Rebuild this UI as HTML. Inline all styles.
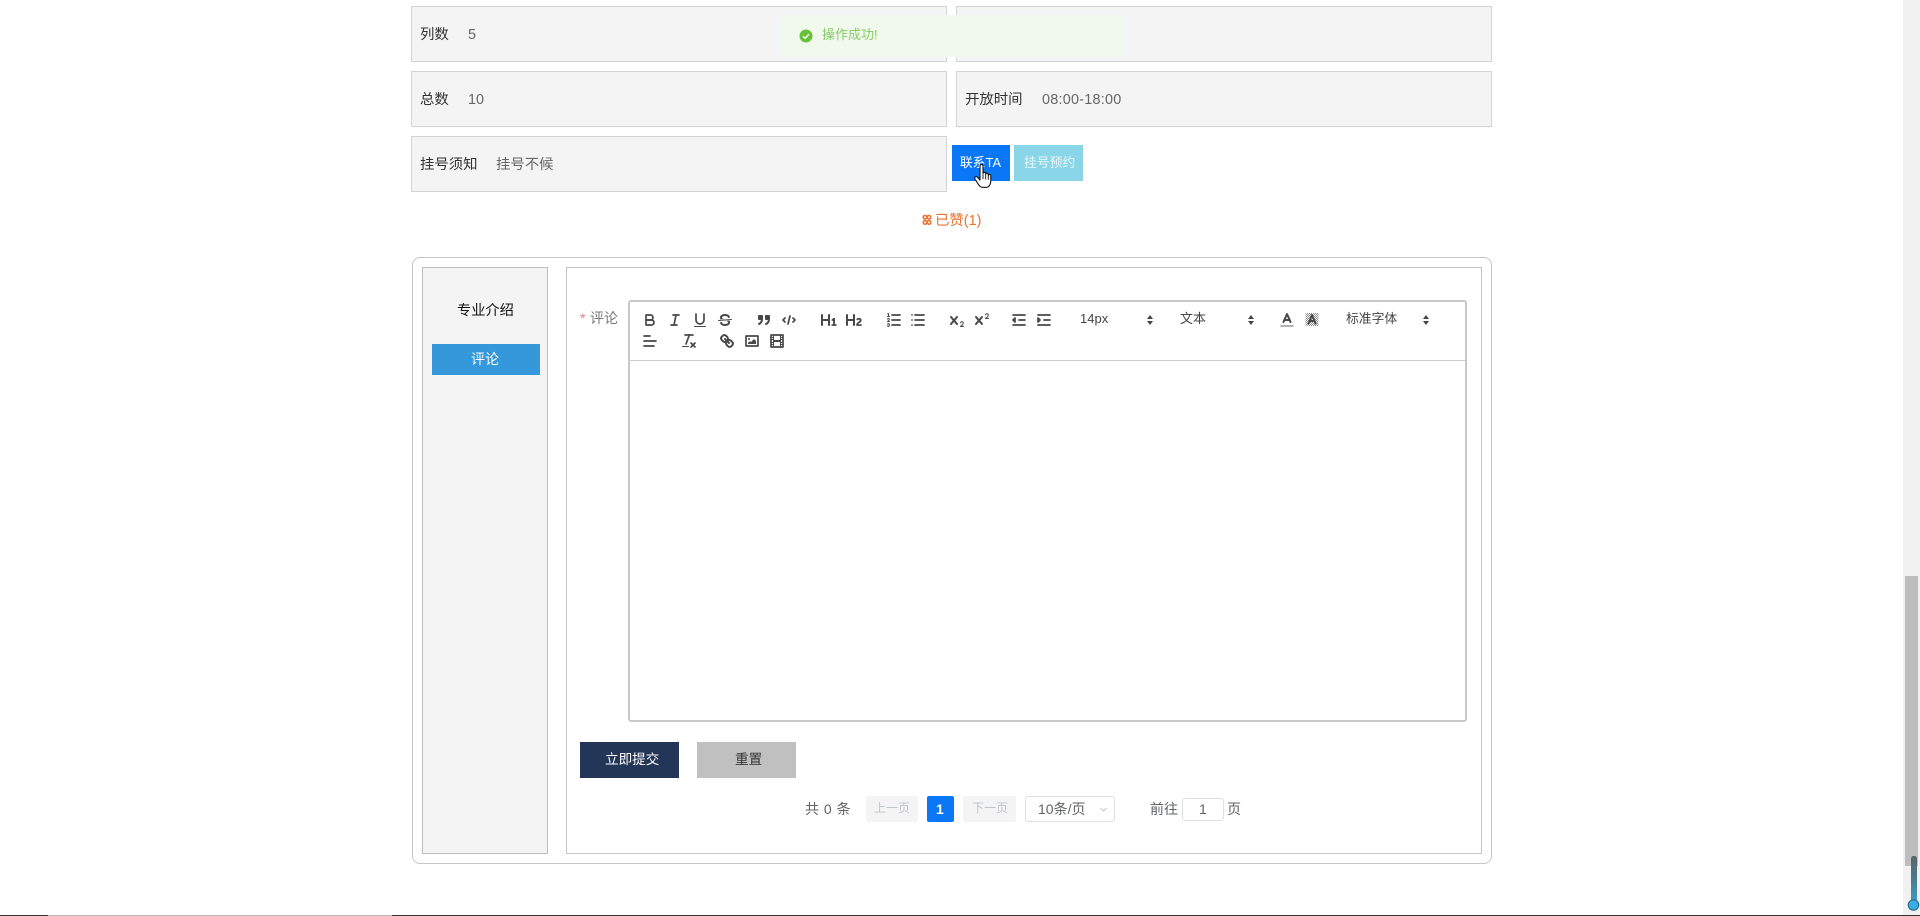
<!DOCTYPE html>
<html lang="zh">
<head>
<meta charset="utf-8">
<title>评论</title>
<style>
html,body{margin:0;padding:0;background:#fff;width:1920px;height:916px;overflow:hidden}
body{position:relative;font-family:"Liberation Sans","Noto Sans CJK SC",sans-serif;font-size:14px;color:#333}
.a{position:absolute;box-sizing:border-box}
.t{position:absolute;white-space:nowrap;line-height:20px;font-size:14px}
.cell{position:absolute;box-sizing:border-box;height:56px;background:#f4f4f4;border:1px solid #d2d4d6}
.lb{color:#333;font-size:14.4px}.val{color:#666;font-size:14.4px}
svg.i{position:absolute;width:18px;height:18px;fill:none;stroke:#484848;stroke-width:1.7;stroke-linecap:round;stroke-linejoin:round}
svg.i .f{fill:#484848;stroke:none}
svg.i .th{stroke-width:1}
svg.i .fs{fill:#484848}
.arr{position:absolute;width:0;height:0;border-left:3px solid transparent;border-right:3px solid transparent}
.up{border-bottom:4px solid #444}
.dn{border-top:4px solid #444}
</style>
</head>
<body>
<!-- info rows -->
<div class="cell" style="left:411px;top:6px;width:536px"></div>
<div class="cell" style="left:956px;top:6px;width:536px"></div>
<div class="cell" style="left:411px;top:71px;width:536px"></div>
<div class="cell" style="left:956px;top:71px;width:536px"></div>
<div class="cell" style="left:411px;top:136px;width:536px"></div>

<div class="t lb" style="left:420px;top:25px">列数</div>
<div class="t val" style="left:468px;top:25px">5</div>
<div class="t lb" style="left:420px;top:90px">总数</div>
<div class="t val" style="left:468px;top:90px">10</div>
<div class="t lb" style="left:965px;top:90px">开放时间</div>
<div class="t val" style="left:1042px;top:90px;letter-spacing:.25px">08:00-18:00</div>
<div class="t lb" style="left:420px;top:155px">挂号须知</div>
<div class="t val" style="left:496px;top:155px">挂号不候</div>

<!-- toast -->
<div class="a" style="left:782px;top:15px;width:340px;height:42px;background:#f0f9eb;border-radius:4px"></div>
<svg class="a" style="left:799px;top:29px" width="14" height="14" viewBox="0 0 14 14"><circle cx="7" cy="7" r="6.5" fill="#67c23a"/><path d="M4 7.2l2.1 2.1L10 5.2" fill="none" stroke="#fff" stroke-width="1.4"/></svg>
<div class="t" style="left:822px;top:25px;color:#86cd67;font-size:13px">操作成功!</div>

<!-- buttons -->
<div class="a" style="left:952px;top:145px;width:58px;height:36px;background:#0a77f7"></div>
<div class="t" style="left:960px;top:153px;color:#fff;font-size:12.8px">联系TA</div>
<div class="a" style="left:1014px;top:145px;width:69px;height:36px;background:#8ad5e8"></div>
<div class="t" style="left:1024px;top:153px;color:#e9f8fb;font-size:12.8px">挂号预约</div>

<!-- like -->
<svg class="a" style="left:922px;top:214px" width="10" height="12" viewBox="0 0 10 12" fill="none" stroke="#e8742f" stroke-width="1.6"><circle cx="3" cy="3.2" r="1.8"/><circle cx="7" cy="3.2" r="1.8"/><circle cx="3" cy="8.4" r="1.8"/><circle cx="7" cy="8.4" r="1.8"/></svg>
<div class="t" style="left:935px;top:211px;color:#e8742f;font-size:14.4px">已赞(1)</div>

<!-- main box -->
<div class="a" style="left:412px;top:257px;width:1080px;height:607px;border:1px solid #c6c6c6;border-radius:8px"></div>
<div class="a" style="left:422px;top:267px;width:126px;height:587px;background:#f4f4f4;border:1px solid #bdbdbd"></div>
<div class="a" style="left:566px;top:267px;width:916px;height:587px;border:1px solid #c4c4c4"></div>

<div class="t" style="left:457px;top:301px;color:#111;font-size:14.2px">专业介绍</div>
<div class="a" style="left:432px;top:344px;width:108px;height:31px;background:#3498db"></div>
<div class="t" style="left:471px;top:349px;color:#fff">评论</div>

<div class="t" style="left:580px;top:308px;color:#e98080">*</div>
<div class="t" style="left:590px;top:308px;color:#777">评论</div>

<!-- editor -->
<div class="a" style="left:628px;top:300px;width:839px;height:422px;border:2px solid #c8c8c8;border-radius:3px"></div>
<div class="a" style="left:630px;top:360px;width:835px;height:1px;background:#ccc"></div>

<!-- toolbar row 1 -->
<svg class="i" style="left:641px;top:311px" viewBox="0 0 18 18"><path d="M5,4H9.5A2.5,2.5,0,0,1,12,6.5v0A2.5,2.5,0,0,1,9.5,9H5A0,0,0,0,1,5,9V4A0,0,0,0,1,5,4Z"/><path d="M5,9h5.5A2.5,2.5,0,0,1,13,11.5v0A2.5,2.5,0,0,1,10.5,14H5a0,0,0,0,1,0,0V9A0,0,0,0,1,5,9Z"/></svg>
<svg class="i" style="left:666px;top:311px" viewBox="0 0 18 18"><line x1="7" x2="13" y1="4" y2="4"/><line x1="5" x2="11" y1="14" y2="14"/><line x1="8" x2="10" y1="14" y2="4"/></svg>
<svg class="i" style="left:691px;top:311px" viewBox="0 0 18 18"><path d="M5,3V9a4.012,4.012,0,0,0,4,4H9a4.012,4.012,0,0,0,4-4V3"/><rect class="f" height="1" rx=".5" ry=".5" width="12" x="3" y="15"/></svg>
<svg class="i" style="left:716px;top:311px" viewBox="0 0 18 18"><line class="th" x1="15.5" x2="2.5" y1="8.5" y2="9.5"/><path class="f" d="M9.007,8C6.542,7.791,6,7.519,6,6.5,6,5.792,7.283,5,9,5c1.571,0,2.765.679,2.969,1.309a1,1,0,0,0,1.9-.617C13.356,4.106,11.354,3,9,3,6.2,3,4,4.538,4,6.5a3.2,3.2,0,0,0,.5,1.843Z"/><path class="f" d="M8.984,10C11.457,10.208,12,10.479,12,11.5c0,.708-1.283,1.5-3,1.5-1.571,0-2.765-.679-2.969-1.309a1,1,0,1,0-1.9.617C4.644,13.894,6.646,15,9,15c2.8,0,5-1.538,5-3.5a3.2,3.2,0,0,0-.5-1.843Z"/></svg>
<svg class="i" style="left:755px;top:311px;stroke-width:2" viewBox="0 0 18 18"><rect class="fs" height="3" width="3" x="4" y="5"/><rect class="fs" height="3" width="3" x="11" y="5"/><path d="M7,8c0,4.031-3,5-3,5"/><path d="M14,8c0,4.031-3,5-3,5"/></svg>
<svg class="i" style="left:780px;top:311px" viewBox="0 0 18 18"><polyline points="5 7 3 9 5 11"/><polyline points="13 7 15 9 13 11"/><line x1="10" x2="8" y1="5" y2="13"/></svg>
<svg class="i" style="left:820px;top:311px" viewBox="0 0 18 18"><path class="f" d="M10,4V14a1,1,0,0,1-2,0V10H3v4a1,1,0,0,1-2,0V4A1,1,0,0,1,3,4V8H8V4a1,1,0,0,1,2,0Zm6.06787,9.209H14.98975V7.59863a.54085.54085,0,0,0-.605-.60547h-.62744a1.01119,1.01119,0,0,0-.748.29688L11.645,8.56641a.5435.5435,0,0,0-.022.8584l.28613.30762a.53861.53861,0,0,0,.84717.0332l.09912-.08789a1.2137,1.2137,0,0,0,.2417-.35254h.02246s-.01123.30859-.01123.60547V13.209H12.041a.54085.54085,0,0,0-.605.60547v.43945a.54085.54085,0,0,0,.605.60547h4.02686a.54085.54085,0,0,0,.605-.60547v-.43945A.54085.54085,0,0,0,16.06787,13.209Z"/></svg>
<svg class="i" style="left:845px;top:311px" viewBox="0 0 18 18"><path class="f" d="M16.73975,13.81445v.43945a.54085.54085,0,0,1-.605.60547H11.855a.58392.58392,0,0,1-.64893-.60547V14.0127c0-2.90527,3.39941-3.42187,3.39941-4.55469a.77675.77675,0,0,0-.84717-.78125,1.17684,1.17684,0,0,0-.83594.38477c-.2749.26367-.561.374-.85791.13184l-.4292-.34082c-.30811-.24219-.38525-.51758-.1543-.81445a2.97155,2.97155,0,0,1,2.45361-1.17676,2.45393,2.45393,0,0,1,2.68408,2.40918c0,2.45312-3.1792,2.92676-3.27832,3.93848h2.79443A.54085.54085,0,0,1,16.73975,13.81445ZM9,3A.99974.99974,0,0,0,8,4V8H3V4A1,1,0,0,0,1,4V14a1,1,0,0,0,2,0V10H8v4a1,1,0,0,0,2,0V4A.99974.99974,0,0,0,9,3Z"/></svg>
<svg class="i" style="left:885px;top:311px" viewBox="0 0 18 18"><line x1="7" x2="15" y1="4" y2="4"/><line x1="7" x2="15" y1="9" y2="9"/><line x1="7" x2="15" y1="14" y2="14"/><line class="th" x1="2.5" x2="4.5" y1="5.5" y2="5.5"/><path class="f" d="M3.5,6A0.5,0.5,0,0,1,3,5.5V3.085l-0.276.138A0.5,0.5,0,0,1,2.053,3c-0.124-.247-0.023-0.324.224-0.447l1-.5A0.5,0.5,0,0,1,4,2.5v3A0.5,0.5,0,0,1,3.5,6Z"/><path class="th" d="M4.5,10.5h-2c0-.234,1.85-1.076,1.85-2.234A0.959,0.959,0,0,0,2.5,8.156"/><path class="th" d="M2.5,14.846a0.959,0.959,0,0,0,1.85-.109A0.7,0.7,0,0,0,3.75,14a0.688,0.688,0,0,0,.6-0.736,0.959,0.959,0,0,0-1.85-.109"/></svg>
<svg class="i" style="left:909px;top:311px" viewBox="0 0 18 18"><line x1="6" x2="15" y1="4" y2="4"/><line x1="6" x2="15" y1="9" y2="9"/><line x1="6" x2="15" y1="14" y2="14"/><line x1="3" x2="3" y1="4" y2="4"/><line x1="3" x2="3" y1="9" y2="9"/><line x1="3" x2="3" y1="14" y2="14"/></svg>
<svg class="i" style="left:948px;top:311px" viewBox="0 0 18 18"><path class="f" d="M15.5,15H13.861a3.858,3.858,0,0,0,1.914-2.975,1.8,1.8,0,0,0-1.6-1.751A1.921,1.921,0,0,0,12.021,11.7a0.50013,0.50013,0,1,0,.957.291h0a0.914,0.914,0,0,1,1.053-.725,0.81,0.81,0,0,1,.744.762c0,1.076-1.16971,1.86982-1.93971,2.43082A1.45639,1.45639,0,0,0,12,15.5a0.5,0.5,0,0,0,.5.5h3A0.5,0.5,0,0,0,15.5,15Z"/><path class="f" d="M9.65,5.241a1,1,0,0,0-1.409.108L6,7.964,3.759,5.349A1,1,0,0,0,2.192,6.59178Q2.2135,6.6178,2.241,6.651L4.684,9.5,2.241,12.35A1,1,0,0,0,3.71,13.70722q0.02322-.02511.049-0.05722L6,11.036,8.241,13.65a1,1,0,1,0,1.567-1.24277Q9.78722,12.3822,9.759,12.35L7.316,9.5,9.759,6.651A1,1,0,0,0,9.65,5.241Z"/></svg>
<svg class="i" style="left:973px;top:311px" viewBox="0 0 18 18"><path class="f" d="M15.5,7H13.861a4.015,4.015,0,0,0,1.914-2.975,1.8,1.8,0,0,0-1.6-1.751A1.922,1.922,0,0,0,12.021,3.7a0.5,0.5,0,1,0,.957.291,0.917,0.917,0,0,1,1.053-.725,0.81,0.81,0,0,1,.744.762c0,1.077-1.164,1.925-1.934,2.486A1.423,1.423,0,0,0,12,7.5a0.5,0.5,0,0,0,.5.5h3A0.5,0.5,0,0,0,15.5,7Z"/><path class="f" d="M9.651,5.241a1,1,0,0,0-1.41.108L6,7.964,3.759,5.349a1,1,0,1,0-1.519,1.3L4.683,9.5,2.241,12.35a1,1,0,1,0,1.519,1.3L6,11.036,8.241,13.65a1,1,0,0,0,1.519-1.3L7.317,9.5,9.759,6.651A1,1,0,0,0,9.651,5.241Z"/></svg>
<svg class="i" style="left:1010px;top:311px" viewBox="0 0 18 18"><line x1="3" x2="15" y1="14" y2="14"/><line x1="3" x2="15" y1="4" y2="4"/><line x1="9" x2="15" y1="9" y2="9"/><polygon class="fs" points="5 7 5 11 3 9 5 7"/></svg>
<svg class="i" style="left:1035px;top:311px" viewBox="0 0 18 18"><line x1="3" x2="15" y1="14" y2="14"/><line x1="3" x2="15" y1="4" y2="4"/><line x1="9" x2="15" y1="9" y2="9"/><polygon class="fs" points="3 7 3 11 5 9 3 7"/></svg>

<div class="t" style="left:1080px;top:309px;font-size:13px;color:#444">14px</div>
<div class="arr up" style="left:1147px;top:315px"></div><div class="arr dn" style="left:1147px;top:321px"></div>
<div class="t" style="left:1180px;top:309px;font-size:13px;color:#444">文本</div>
<div class="arr up" style="left:1248px;top:315px"></div><div class="arr dn" style="left:1248px;top:321px"></div>
<svg class="i" style="left:1278px;top:311px;stroke-width:2" viewBox="0 0 18 18"><line x1="3" x2="15" y1="15" y2="15" stroke="#999" stroke-width="1.4"/><polyline points="5.5 11 9 3 12.5 11"/><line x1="11.63" x2="6.38" y1="9" y2="9"/></svg>
<svg class="i" style="left:1303px;top:311px;stroke-width:2" viewBox="0 0 18 18"><defs><pattern id="dots" width="2" height="2" patternUnits="userSpaceOnUse"><rect width="1" height="1" fill="#888" stroke="none"/><rect x="1" y="1" width="1" height="1" fill="#888" stroke="none"/></pattern></defs><rect x="2.5" y="2" width="13" height="13" fill="url(#dots)" stroke="none"/><polyline points="5.5 12.5 9 4 12.5 12.5"/><line x1="11.63" x2="6.38" y1="10" y2="10"/></svg>
<div class="t" style="left:1346px;top:309px;font-size:12.8px;color:#444">标准字体</div>
<div class="arr up" style="left:1423px;top:315px"></div><div class="arr dn" style="left:1423px;top:321px"></div>

<!-- toolbar row 2 -->
<svg class="i" style="left:641px;top:332px" viewBox="0 0 18 18"><line x1="3" x2="15" y1="9" y2="9"/><line x1="3" x2="13" y1="14" y2="14"/><line x1="3" x2="9" y1="4" y2="4"/></svg>
<svg class="i" style="left:680px;top:332px" viewBox="0 0 18 18"><line x1="5" x2="13" y1="3" y2="3"/><line x1="6" x2="9.35" y1="12" y2="3"/><line x1="11" x2="15" y1="11" y2="15"/><line x1="15" x2="11" y1="11" y2="15"/><rect class="f" height="1" rx=".5" ry=".5" width="7" x="2" y="14"/></svg>
<svg class="i" style="left:718px;top:332px;stroke-width:2" viewBox="0 0 18 18"><line x1="7" x2="11" y1="7" y2="11"/><path d="M8.9,4.577a3.476,3.476,0,0,1,.36,4.679A3.476,3.476,0,0,1,4.577,8.9C3.185,7.5,2.035,6.4,4.217,4.217S7.5,3.185,8.9,4.577Z"/><path d="M13.423,9.1a3.476,3.476,0,0,0-4.679-.36,3.476,3.476,0,0,0,.36,4.679c1.392,1.392,2.5,2.542,4.679.36S14.815,10.5,13.423,9.1Z"/></svg>
<svg class="i" style="left:743px;top:332px" viewBox="0 0 18 18"><rect height="10" width="12" x="3" y="4"/><circle class="f" cx="6" cy="7" r="1"/><polyline class="f" points="5 12 5 11 7 9 8 10 11 7 13 9 13 12 5 12"/></svg>
<svg class="i" style="left:768px;top:332px" viewBox="0 0 18 18"><rect height="12" width="12" x="3" y="3"/><rect class="f" height="12" width="1" x="5" y="3"/><rect class="f" height="12" width="1" x="12" y="3"/><rect class="f" height="2" width="8" x="5" y="8"/><rect class="f" height="1" width="3" x="3" y="5"/><rect class="f" height="1" width="3" x="3" y="7"/><rect class="f" height="1" width="3" x="3" y="10"/><rect class="f" height="1" width="3" x="3" y="12"/><rect class="f" height="1" width="3" x="12" y="5"/><rect class="f" height="1" width="3" x="12" y="7"/><rect class="f" height="1" width="3" x="12" y="10"/><rect class="f" height="1" width="3" x="12" y="12"/></svg>

<!-- form buttons -->
<div class="a" style="left:580px;top:742px;width:99px;height:36px;background:#233658"></div>
<div class="t" style="left:605px;top:750px;color:#fff;font-size:13.6px">立即提交</div>
<div class="a" style="left:697px;top:742px;width:99px;height:36px;background:#c0c0c0"></div>
<div class="t" style="left:735px;top:750px;color:#333;font-size:13.6px">重置</div>

<!-- pagination -->
<div class="t" style="left:805px;top:799px;color:#606266;letter-spacing:.5px">共 0 条</div>
<div class="a" style="left:866px;top:796px;width:52px;height:26px;background:#f4f4f5;border-radius:2px"></div>
<div class="t" style="left:874px;top:798px;font-size:12px;color:#c0c4cc">上一页</div>
<div class="a" style="left:927px;top:796px;width:27px;height:26px;background:#0a77f7;border-radius:2px"></div>
<div class="t" style="left:936px;top:799px;font-size:14px;font-weight:bold;color:#fff">1</div>
<div class="a" style="left:963px;top:796px;width:53px;height:26px;background:#f4f4f5;border-radius:2px"></div>
<div class="t" style="left:972px;top:798px;font-size:12px;color:#c0c4cc">下一页</div>
<div class="a" style="left:1025px;top:796px;width:90px;height:26px;border:1px solid #dcdfe6;border-radius:3px"></div>
<div class="t" style="left:1038px;top:799px;font-size:14px;color:#606266">10条/页</div>
<svg class="a" style="left:1100px;top:807px" width="7" height="5" viewBox="0 0 7 5"><path d="M.5 1l3 3 3-3" fill="none" stroke="#c0c4cc"/></svg>
<div class="t" style="left:1150px;top:799px;color:#606266">前往</div>
<div class="a" style="left:1182px;top:798px;width:42px;height:23px;border:1px solid #dcdfe6;border-radius:3px"></div>
<div class="t" style="left:1199px;top:799px;font-size:14px;color:#606266">1</div>
<div class="t" style="left:1227px;top:799px;color:#606266">页</div>

<!-- scrollbar -->
<div class="a" style="left:1903px;top:0;width:17px;height:916px;background:#f1f1f1"></div>
<div class="a" style="left:1905px;top:576px;width:13px;height:290px;background:#bdbdbd"></div>
<svg class="a" style="left:1905px;top:854px" width="15" height="61" viewBox="0 0 15 61"><defs><linearGradient id="st" x1="0" y1="0" x2="0" y2="1"><stop offset="0" stop-color="#56666a"/><stop offset=".5" stop-color="#4a7d92"/><stop offset="1" stop-color="#3a9fd0"/></linearGradient></defs><rect x="6" y="2" width="6" height="48" rx="2.5" fill="url(#st)"/><circle cx="8.5" cy="51" r="5.2" fill="#39aee0" stroke="#2c6f8c" stroke-width="1.2"/></svg>

<!-- bottom edge -->
<div class="a" style="left:0;top:915px;width:1920px;height:1px;background:#333"></div>
<div class="a" style="left:48px;top:915px;width:344px;height:1px;background:#bbb"></div>

<!-- hand cursor -->
<svg class="a" style="left:974px;top:164px" width="19" height="24" viewBox="0 0 19 24"><path d="M6,2 c0-2.2 3-2.2 3,0 V9.5 c0-1.6 2.7-1.6 2.7,.2 v.6 c0-1.5 2.6-1.4 2.6,.3 v.8 c0-1.4 2.5-1.2 2.5,.6 V17 c0,3-1.8,6.3-4,6.3 H8.5 c-2,0-3.2-1.5-4.2-3 L1,15 c-1.1-2 1.2-3.2 2.6-1.6 L6,16 Z" fill="#fff" stroke="#111" stroke-width="1.1" stroke-linejoin="round"/><path d="M9 10v5M11.7 10.5v5M14.3 11.3v4.5" stroke="#111" stroke-width=".9" fill="none"/></svg>
</body>
</html>
